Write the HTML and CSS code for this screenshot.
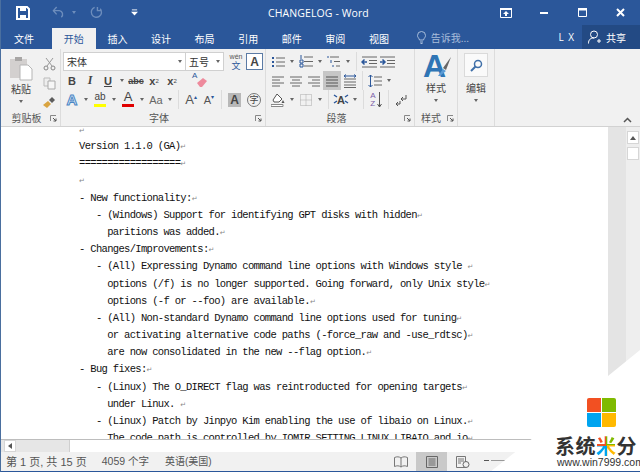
FILE: index.html
```html
<!DOCTYPE html>
<html lang="zh-CN">
<head>
    <meta charset="UTF-8">
    <title>CHANGELOG - Word</title>
    <link rel="stylesheet" href="styles.css">
</head>
<body>
    <svg class="defs" width="0" height="0">
        <symbol id="left" viewBox="0 0 14 12"><path d="M1 2h12M1 5h8M1 8h12M1 11h8" stroke="#666" fill="none"/></symbol>
        <symbol id="center" viewBox="0 0 14 12"><path d="M1 2h12M3 5h8M1 8h12M3 11h8" stroke="#666" fill="none"/></symbol>
        <symbol id="right" viewBox="0 0 14 12"><path d="M1 2h12M5 5h8M1 8h12M5 11h8" stroke="#666" fill="none"/></symbol>
        <symbol id="launch" viewBox="0 0 7 7"><path d="M.5 6V.5H6" stroke="#888" fill="none"/><path d="M3 3l3 3M6 3.500V6H3.500" stroke="#555" fill="none"/></symbol>
    </svg>

    <!-- Title bar -->
    <header class="titlebar">
        <div class="quick">
            <svg class="save" viewBox="0 0 14 14"><path d="M1 1h10l2 2v10H1z" fill="none" stroke="#fff" stroke-width="2"/><path d="M4 1h6v4H4zM4 9h6v4H4z" fill="#fff"/></svg>
            <svg class="undo" viewBox="0 0 14 14"><path d="M5 1L1.500 5 5 9M2 5h6a4 4 0 0 1 2 7" fill="none" stroke="#6d8dbc" stroke-width="1.500"/></svg>
            <span class="dd dim"></span>
            <svg class="redo" viewBox="0 0 14 14"><path d="M11 3a5.500 5.500 0 1 1-6-1.500M8 1v4h4" fill="none" stroke="#6d8dbc" stroke-width="1.500"/></svg>
            <svg class="custom" viewBox="0 0 10 8"><path d="M2 1h6" stroke="#fff"/><path d="M1 3h8L5 7.500z" fill="#fff"/></svg>
        </div>
        <div class="doc-title">CHANGELOG - Word</div>
        <div class="winctl">
            <span><svg width="12" height="10" viewBox="0 0 12 10"><path d="M.5.500h11v9H.5z" fill="none" stroke="#fff"/><path d="M0 0h12v2H0zM6 3l3 3H7v2H5V6H3z" fill="#fff"/></svg></span>
            <span><svg width="8" height="2"><path d="M0 0h8v2H0z" fill="#fff"/></svg></span>
            <span><svg width="9" height="9" viewBox="0 0 9 9"><path d="M.5.500h8v8H.5z" fill="none" stroke="#fff"/><path d="M0 0h9v2.500H0z" fill="#fff"/></svg></span>
            <span><svg width="9" height="9" viewBox="0 0 9 9"><path d="M1 1l7 7M8 1L1 8" stroke="#fff" stroke-width="2"/></svg></span>
        </div>
    </header>

    <!-- Tabs -->
    <nav class="tabs">
        <a class="tab tab-file">文件</a>
        <a class="tab active">开始</a>
        <a class="tab">插入</a>
        <a class="tab">设计</a>
        <a class="tab">布局</a>
        <a class="tab">引用</a>
        <a class="tab">邮件</a>
        <a class="tab">审阅</a>
        <a class="tab">视图</a>
        <div class="tell">
            <svg width="9" height="13" viewBox="0 0 9 13"><path d="M2.500 9C2 7 .5 6.500.5 4.500a4 4 0 0 1 8 0C8.500 6.500 7 7 6.500 9zM3 11h3M3.500 12.500h2" fill="none" stroke="#a9bedb"/></svg>
            <span>告诉我...</span>
        </div>
        <div class="user">L X</div>
        <div class="share">
            <svg width="13" height="14" viewBox="0 0 13 14"><circle cx="6" cy="4.500" r="3.500" fill="none" stroke="#fff"/><path d="M.5 13.500c0-4 2-5.500 5.500-5.500M9 11h4M11 9v4" fill="none" stroke="#fff"/></svg>
            <span>共享</span>
        </div>
    </nav>

    <!-- Ribbon -->
    <section class="ribbon">
        <div class="group g-clip">
            <div class="group-body clip-body">
                <div class="big-btn">
                    <svg width="24" height="26" viewBox="0 0 24 26"><path d="M1 4h17v19H1z" fill="#d3d0cf"/><path d="M6 2h7v4H6z" fill="#a8a6a5"/><path d="M11 10h8l4 4v11H11z" fill="#fff" stroke="#b5b5b5"/></svg>
                    <span class="big-label">粘贴</span>
                    <span class="dd"></span>
                </div>
                <div class="clip-small">
                    <svg width="13" height="14" viewBox="0 0 13 14"><path d="M3 1l6 8M10 1L4 9" stroke="#999" fill="none"/><circle cx="3" cy="11" r="2" fill="none" stroke="#888"/><circle cx="10" cy="11" r="2" fill="none" stroke="#888"/></svg>
                    <svg width="13" height="13" viewBox="0 0 13 13"><path d="M1 1h6v8H1z" fill="#eee" stroke="#bbb"/><path d="M5 4h7v8H5z" fill="#f6f6f6" stroke="#aaa"/></svg>
                    <svg width="14" height="13" viewBox="0 0 14 13"><path d="M1 9l5-4 3 3-4 4z" fill="#d9a441"/><path d="M7 4l3-3 3 3-3 3z" fill="#5d5d5d"/></svg>
                </div>
            </div>
            <div class="group-label">剪贴板<svg class="launch"><use href="#launch"/></svg></div>
        </div>

        <div class="group g-font">
            <div class="group-body">
                <div class="row">
                    <div class="combo combo-name">宋体<span class="dd"></span></div>
                    <div class="combo combo-size">五号<span class="dd"></span></div>
                    <span class="tool wen">wén<b>文</b></span>
                    <span class="tool boxed">A</span>
                </div>
                <div class="row">
                    <span class="tool txt">B</span>
                    <span class="tool txt ital">I</span>
                    <span class="tool txt under">U</span>
                    <span class="dd"></span>
                    <span class="tool txt strike">abc</span>
                    <span class="tool txt">x<sub>2</sub></span>
                    <span class="tool txt">x<sup>2</sup></span>
                    <span class="tool eraser">
                        <small class="eraser-a">A</small>
                        <svg width="12" height="11" viewBox="0 0 12 11"><path d="M1 6l6-5 4 3-5 6H4z" fill="#ee8a9c"/></svg>
                    </span>
                </div>
                <div class="row">
                    <span class="tool glow">A</span><span class="dd"></span>
                    <span class="tool mark">ab<i class="mark-bar yellow"></i></span><span class="dd"></span>
                    <span class="tool mark color">A<i class="mark-bar red"></i></span><span class="dd"></span>
                    <span class="tool case">Aa</span><span class="dd"></span>
                    <span class="vsep"></span>
                    <span class="tool grow">A<small>▴</small></span>
                    <span class="tool grow shrink">A<small>▾</small></span>
                    <span class="vsep"></span>
                    <span class="tool shade">A</span>
                    <span class="tool circled">字</span>
                </div>
            </div>
            <div class="group-label">字体<svg class="launch"><use href="#launch"/></svg></div>
        </div>

        <div class="group g-para">
            <div class="group-body">
                <div class="row">
                    <span class="tool"><svg width="14" height="12" viewBox="0 0 14 12"><path d="M5 2h9M5 6h9M5 10h9" stroke="#666"/><path d="M1 1h2v2H1zM1 5h2v2H1zM1 9h2v2H1z" fill="#2b579a"/></svg></span><span class="dd"></span>
                    <span class="tool"><svg width="14" height="13" viewBox="0 0 14 13"><path d="M5 2h9M5 6.500h9M5 11h9" stroke="#666"/><path d="M2 0v4M1 5h3v3H1zM1 9h3v3H1z" fill="none" stroke="#2b579a"/></svg></span><span class="dd"></span>
                    <span class="tool"><svg width="14" height="13" viewBox="0 0 14 13"><path d="M3 2h9M7 6.500h6M9 11h4" stroke="#666"/><path d="M1 1v2M4 5v3M6 10v2" stroke="#2b579a"/></svg></span><span class="dd"></span>
                    <span class="vsep"></span>
                    <span class="tool"><svg width="16" height="12" viewBox="0 0 16 12"><path d="M1 1h15M8 4.500h8M8 7.500h8M1 11h15" stroke="#666"/><path d="M6 6H1M3.500 3.500L1 6l2.500 2.500" fill="none" stroke="#2b579a" stroke-width="1.500"/></svg></span>
                    <span class="tool"><svg width="16" height="12" viewBox="0 0 16 12"><path d="M1 1h15M8 4.500h8M8 7.500h8M1 11h15" stroke="#666"/><path d="M1 6h5M3.500 3.500L6 6 3.500 8.500" fill="none" stroke="#2b579a" stroke-width="1.500"/></svg></span>
                </div>
                <div class="row">
                    <span class="tool"><svg class="i14"><use href="#left"/></svg></span>
                    <span class="tool"><svg class="i14"><use href="#center"/></svg></span>
                    <span class="tool"><svg class="i14"><use href="#right"/></svg></span>
                    <span class="tool selected"><svg width="14" height="12" viewBox="0 0 14 12"><path d="M1 2h12M1 5h12M1 8h12M1 11h12" stroke="#555" fill="none"/></svg></span>
                    <span class="tool"><svg width="14" height="14" viewBox="0 0 14 14"><path d="M1 5h12M1 8h12M1 11h12M1 13.500h12" stroke="#666"/><path d="M1 2h12M3 .5L1 2l2 1.500M11 .5L13 2l-2 1.500" fill="none" stroke="#2b579a"/></svg></span>
                    <span class="vsep"></span>
                    <span class="tool"><svg width="14" height="14" viewBox="0 0 14 14"><path d="M6 3h8M6 7h8M6 11h8" stroke="#666"/><path d="M2.500 1v12M.5 3l2-2 2 2M.5 11l2 2 2-2" fill="none" stroke="#2b579a"/></svg></span><span class="dd"></span>
                </div>
                <div class="row">
                    <span class="tool"><svg width="15" height="15" viewBox="0 0 15 15"><path d="M2 8l4-6 5 5-3 3H3z" fill="#fff" stroke="#555"/><path d="M12 8l1.500 3h-3z" fill="#555"/><path d="M0 12.500h12v2H0z" fill="#fff" stroke="#888"/></svg></span><span class="dd"></span>
                    <span class="tool"><svg width="12" height="12" viewBox="0 0 12 12"><path d="M.5.500h11v11H.5zM6 .5v11M.5 6h11" fill="none" stroke="#aaa" stroke-dasharray="1 1"/></svg></span><span class="dd"></span>
                    <span class="vsep"></span>
                    <span class="tool layout">A<svg width="16" height="10" viewBox="0 0 16 10"><path d="M1 1l3 2M15 1l-3 2M1 9l3-2M15 9l-3-2" stroke="#2b579a" stroke-width="1.500"/></svg></span><span class="dd"></span>
                    <span class="vsep"></span>
                    <span class="tool sort"><span>A<br>Z</span><svg width="5" height="16" viewBox="0 0 5 16"><path d="M2.500 0v15M.5 12l2 3 2-3" fill="none" stroke="#555"/></svg></span>
                    <span class="vsep"></span>
                    <span class="tool"><svg width="12" height="12" viewBox="0 0 12 12"><path d="M11 1v4H6M8 3L6 5l2 2M5 7v3H1M3 8l-2 2 2 2" fill="none" stroke="#555"/></svg></span>
                </div>
            </div>
            <div class="group-label">段落<svg class="launch"><use href="#launch"/></svg></div>
        </div>

        <div class="group g-styles">
            <div class="group-body big-col">
                <div class="styles-icon">A
                    <svg width="14" height="22" viewBox="0 0 14 22"><path d="M13 1L5 12l3 2z" fill="#666"/><path d="M5 13l3 2-6 5H0z" fill="#5b9bd5"/></svg>
                </div>
                <span class="big-label">样式</span>
                <span class="dd"></span>
            </div>
            <div class="group-label">样式<svg class="launch"><use href="#launch"/></svg></div>
        </div>

        <div class="group g-edit">
            <div class="group-body big-col">
                <div class="edit-box">
                    <svg width="13" height="13" viewBox="0 0 13 13"><circle cx="8" cy="5" r="3.500" fill="none" stroke="#3f6fa8" stroke-width="1.500"/><path d="M5.500 7.500L1 12" stroke="#3f6fa8" stroke-width="2"/></svg>
                </div>
                <span class="big-label">编辑</span>
                <span class="dd"></span>
            </div>
        </div>

        <svg class="collapse" width="9" height="6" viewBox="0 0 9 6"><path d="M1 5l3.500-3.500L8 5" fill="none" stroke="#555" stroke-width="1.500"/></svg>
    </section>

    <!-- Document -->
    <main class="workspace">
        <div class="page">
<pre class="line first"><i>↵</i></pre>
<pre class="line">Version 1.1.0 (GA)<i>↵</i></pre>
<pre class="line">==================<i>↵</i></pre>
<pre class="line"><i>↵</i></pre>
<pre class="line">- New functionality:<i>↵</i></pre>
<pre class="line">   - (Windows) Support for identifying GPT disks with hidden<i>↵</i></pre>
<pre class="line">     paritions was added.<i>↵</i></pre>
<pre class="line">- Changes/Improvements:<i>↵</i></pre>
<pre class="line">   - (All) Expressing Dynamo command line options with Windows style <i>↵</i></pre>
<pre class="line">     options (/f) is no longer supported. Going forward, only Unix style<i>↵</i></pre>
<pre class="line">     options (-f or --foo) are available.<i>↵</i></pre>
<pre class="line">   - (All) Non-standard Dynamo command line options used for tuning<i>↵</i></pre>
<pre class="line">     or activating alternative code paths (-force_raw and -use_rdtsc)<i>↵</i></pre>
<pre class="line">     are now consolidated in the new --flag option.<i>↵</i></pre>
<pre class="line">- Bug fixes:<i>↵</i></pre>
<pre class="line">   - (Linux) The O_DIRECT flag was reintroducted for opening targets<i>↵</i></pre>
<pre class="line">     under Linux. <i>↵</i></pre>
<pre class="line">   - (Linux) Patch by Jinpyo Kim enabling the use of libaio on Linux.<i>↵</i></pre>
<pre class="line">     The code path is controlled by IOMIR_SETTING_LINUX_LIBAIO and io<i>↵</i></pre>
        </div>
        <div class="margin-strip"></div>
        <aside class="vscroll">
            <span class="vbtn"><i class="up"></i></span>
            <span class="vthumb"></span>
        </aside>
    </main>

    <div class="hscroll">
        <span class="hbtn"><i class="lf"></i></span>
        <span class="htrack"></span>
        <span class="hthumb"></span>
    </div>

    <!-- Status bar -->
    <footer class="status">
        <span class="st-page">第 1 页, 共 15 页</span>
        <span class="st-count">4059 个字</span>
        <span class="st-lang">英语(美国)</span>
        <div class="views">
            <span class="view"><svg width="14" height="12" viewBox="0 0 14 12"><path d="M.5 1.500C3 .5 5 .5 7 2c2-1.500 4-1.500 6.500-.5v9C11 9.500 9 9.500 7 11c-2-1.500-4-1.500-6.500-.5zM7 2v9" fill="none" stroke="#777"/></svg></span>
            <span class="view on"><svg width="12" height="12" viewBox="0 0 12 12"><path d="M.5.500h11v11H.5z" fill="none" stroke="#666"/><path d="M2.500 3h7M2.500 5h7M2.500 7h7M2.500 9h7" stroke="#666"/></svg></span>
            <span class="view"><svg width="14" height="12" viewBox="0 0 14 12"><path d="M.5.500h9v11H.5zM2 3h6M2 5h6M2 7h3" fill="none" stroke="#777"/><circle cx="10" cy="8.500" r="3" fill="#f1f1f1" stroke="#666"/></svg></span>
            <span class="zoom-minus"></span>
            <span class="zoom-track"></span>
        </div>
    </footer>

    <!-- Watermark pasted over the bottom right corner -->
    <div class="watermark">
        <div class="wm-logo"><i class="r"></i><i class="g"></i><i class="b"></i><i class="y"></i></div>
        <div class="wm-name">系统<em>米</em>分</div>
        <div class="wm-url">www.win7999.com</div>
    </div>
</body>
</html>
```

FILE: styles.css
```css
/* Page frame */
* {
    box-sizing: border-box;
}

body {
    margin: 0;
    width: 640px;
    height: 472px;
    overflow: hidden;
    position: relative;
    display: flex;
    flex-direction: column;
    font-family: "Noto Sans CJK SC", "Liberation Sans", sans-serif;
    font-size: 10px;
    color: #444;
    background: #fff;
    border-left: 1px solid #4a6f9f;
    border-bottom: 1px solid #2b579a;
}

.defs {
    position: absolute;
}

/* Title bar */
.titlebar {
    height: 25px;
    flex: none;
    margin-left: -1px;
    display: flex;
    align-items: center;
    background: #2b579a;
    color: #fff;
}

.quick {
    width: 268px;
    display: flex;
    align-items: center;
}

.save {
    width: 14px;
    height: 14px;
    margin-left: 16px;
}

.undo {
    width: 13px;
    height: 13px;
    margin-left: 22px;
}

.redo {
    width: 13px;
    height: 13px;
    margin-left: 11px;
}

.custom {
    width: 9px;
    height: 7px;
    margin-left: 27px;
}

.doc-title {
    margin-right: auto;
    font-family: "Open Sans", sans-serif;
    font-size: 10.5px;
    letter-spacing: 0.1px;
}

.winctl {
    display: flex;
    margin-right: 1px;
}

.winctl span {
    width: 38px;
    display: flex;
    justify-content: center;
    align-items: center;
}

/* Tabs */
.tabs {
    height: 24px;
    flex: none;
    margin-left: -1px;
    display: flex;
    align-items: flex-end;
    background: #2b579a;
    color: #fff;
}

.tab {
    width: 43.6px;
    height: 21px;
    display: flex;
    align-items: center;
    justify-content: center;
}

.tab-file {
    width: 52px;
    padding-right: 4px;
}

.tab.active {
    background: #f1f1f1;
    color: #2b579a;
}

.tell {
    height: 24px;
    margin-left: 16px;
    display: flex;
    align-items: center;
    gap: 5px;
    color: #a9bedb;
}

.user {
    height: 24px;
    margin-left: auto;
    margin-right: 7px;
    display: flex;
    align-items: center;
    font-family: "Open Sans", sans-serif;
    letter-spacing: 1px;
}

.share {
    width: 58px;
    height: 24px;
    padding-left: 6px;
    display: flex;
    align-items: center;
    gap: 5px;
    background: #234a84;
}

/* Ribbon */
.ribbon {
    height: 78px;
    flex: none;
    position: relative;
    display: flex;
    padding-left: 2px;
    background: #f1f1f1;
    border-bottom: 1px solid #d2d2d2;
}

.group {
    position: relative;
    display: flex;
    flex-direction: column;
    justify-content: space-between;
    padding-top: 3px;
    border-right: 1px solid #dcdcdc;
}

.g-clip {
    width: 58px;
}

.g-font {
    width: 205px;
    padding-left: 2px;
}

.g-para {
    width: 149px;
    padding-left: 3px;
}

.g-styles {
    width: 43px;
}

.g-edit {
    width: 37px;
}

.group-label {
    height: 17px;
    display: flex;
    justify-content: center;
    align-items: center;
    color: #555;
    padding-right: 10px;
}

.launch {
    position: absolute;
    right: 3px;
    bottom: 4px;
    width: 7px;
    height: 7px;
}

.row {
    height: 19px;
    display: flex;
    align-items: center;
}

.tool {
    width: 18px;
    height: 19px;
    flex: none;
    display: flex;
    align-items: center;
    justify-content: center;
    font-family: "Liberation Sans", sans-serif;
    font-size: 12px;
    color: #444;
}

.dd {
    width: 10px;
    height: 10px;
    flex: none;
    display: inline-flex;
    align-items: center;
    justify-content: center;
}

.dd::after {
    content: "";
    border-top: 3px solid #666;
    border-left: 2.5px solid transparent;
    border-right: 2.5px solid transparent;
}

.dd.dim {
    margin-left: 4px;
}

.dd.dim::after {
    border-top-color: #6d8dbc;
}

.vsep {
    width: 1px;
    height: 19px;
    flex: none;
    margin: 0 3px;
    background: #dcdcdc;
}

.i14 {
    width: 14px;
    height: 12px;
}

.selected {
    background: #c6c6c6;
}

/* Clipboard */
.clip-body {
    display: flex;
}

.big-btn {
    width: 36px;
    padding-top: 3px;
    display: flex;
    flex-direction: column;
    align-items: center;
}

.big-label {
    line-height: 15px;
    color: #444;
}

.clip-small {
    display: flex;
    flex-direction: column;
    align-items: center;
    gap: 6px;
    padding-top: 5px;
    margin-left: 3px;
}

/* Font group */
.combo {
    height: 19px;
    flex: none;
    display: flex;
    align-items: center;
    justify-content: space-between;
    padding-left: 3px;
    background: #fff;
    border: 1px solid #d0d0d0;
    color: #333;
}

.combo-name {
    width: 123px;
}

.combo-size {
    width: 39px;
    margin-left: -1px;
    margin-right: 3px;
}

.wen {
    flex-direction: column;
    font-size: 7px;
    line-height: 8px;
    color: #555;
}

.wen b {
    font-family: "Noto Sans CJK SC", sans-serif;
    font-weight: 400;
    font-size: 9px;
    line-height: 9px;
    color: #2b579a;
}

.boxed {
    width: 17px;
    height: 17px;
    margin-left: 1px;
    border: 1px solid #5b7ba5;
    background: #fff;
    font-weight: 700;
    font-size: 12px;
}

.txt {
    font-weight: 700;
    font-size: 11px;
}

.txt sub,
.txt sup {
    font-size: 6px;
    font-weight: 400;
    line-height: 0;
}

.ital {
    font-style: italic;
    font-family: "Liberation Serif", serif;
    font-size: 12px;
}

.under {
    text-decoration: underline;
}

.strike {
    font-size: 9px;
    text-decoration: line-through;
}

.eraser {
    position: relative;
    margin-left: 10px;
    padding: 4px 0 0 3px;
}

.eraser-a {
    position: absolute;
    left: 1px;
    top: 0;
    font-size: 8px;
    line-height: 9px;
    color: #2b579a;
}

.glow {
    font-weight: 700;
    font-size: 15px;
    color: #dbe8f5;
    -webkit-text-stroke: 1px #4a86c5;
}

.mark {
    position: relative;
    align-items: flex-start;
    font-size: 10px;
    line-height: 13px;
}

.mark-bar {
    position: absolute;
    left: 3px;
    right: 3px;
    bottom: 2px;
    height: 3px;
}

.yellow {
    background: #ffff00;
}

.red {
    background: #e00000;
}

.color {
    font-size: 13px;
}

.case {
    font-size: 11px;
    color: #666;
}

.grow {
    font-size: 13px;
    color: #555;
}

.shrink {
    font-size: 11px;
}

.grow small {
    font-size: 6px;
    align-self: flex-start;
    margin-top: 3px;
    color: #2b579a;
}

.shade {
    width: 13px;
    height: 14px;
    margin: 0 3px;
    background: #b8b8b8;
    font-weight: 700;
}

.circled {
    width: 14px;
    height: 14px;
    margin-left: 3px;
    border: 1px solid #777;
    border-radius: 50%;
    font-family: "Noto Sans CJK SC", sans-serif;
    font-size: 9px;
}

/* Paragraph group */
.layout {
    position: relative;
    font-weight: 700;
    font-size: 11px;
}

.layout svg {
    position: absolute;
    left: 1px;
    top: 4px;
}

.sort {
    gap: 1px;
    font-size: 8px;
    line-height: 8px;
    color: #7a5fa8;
}

/* Styles and editing */
.big-col {
    display: flex;
    flex-direction: column;
    align-items: center;
}

.styles-icon {
    height: 28px;
    width: 26px;
    position: relative;
    font-family: "Liberation Sans", sans-serif;
    font-weight: 700;
    font-size: 32px;
    line-height: 28px;
    color: #2f75b5;
}

.styles-icon svg {
    position: absolute;
    right: -3px;
    top: 4px;
}

.edit-box {
    width: 24px;
    height: 24px;
    margin-top: 1px;
    margin-bottom: 3px;
    display: flex;
    align-items: center;
    justify-content: center;
    background: #fafafa;
    border: 1px solid #dadada;
}

.collapse {
    position: absolute;
    right: 8px;
    bottom: 3px;
}

/* Document area */
.workspace {
    flex: 1;
    min-height: 0;
    display: flex;
    overflow: hidden;
}

.page {
    width: 607px;
    flex: none;
    padding-left: 78px;
    background: #fff;
    overflow: hidden;
}

.line {
    margin: 0;
    height: 17.2px;
    line-height: 17.2px;
    font-family: "Liberation Mono", monospace;
    font-size: 10.5px;
    letter-spacing: -0.67px;
    color: #111;
    white-space: pre;
}

.line.first {
    height: 11px;
    line-height: 6px;
}

.line i {
    font-family: "DejaVu Sans", sans-serif;
    font-style: normal;
    font-size: 7px;
    letter-spacing: 0;
    color: #888;
}

.margin-strip {
    width: 18px;
    flex: none;
    background: #e4e4e4;
}

.vscroll {
    flex: 1;
    display: flex;
    flex-direction: column;
    align-items: center;
    gap: 3px;
    padding-top: 4px;
    background: #eeeeee;
}

.vbtn,
.vthumb {
    width: 12px;
    height: 13px;
    display: flex;
    align-items: center;
    justify-content: center;
    background: #fff;
    border: 1px solid #d6d6d6;
}

.up {
    border-bottom: 4px solid #555;
    border-left: 3px solid transparent;
    border-right: 3px solid transparent;
}

.hscroll {
    height: 13px;
    flex: none;
    display: flex;
    align-items: stretch;
    padding-left: 3px;
    background: #e6e6e6;
    border-top: 1px solid #bdbdbd;
}

.hbtn {
    width: 12px;
    display: flex;
    align-items: center;
    justify-content: center;
    background: #fff;
    border: 1px solid #d6d6d6;
}

.lf {
    border-right: 4px solid #555;
    border-top: 3px solid transparent;
    border-bottom: 3px solid transparent;
}

.htrack {
    width: 53px;
}

.hthumb {
    flex: 1;
    background: #fff;
    border-left: 1px solid #cfcfcf;
}

/* Status bar */
.status {
    height: 19px;
    flex: none;
    display: flex;
    align-items: center;
    padding-left: 5px;
    padding-bottom: 2px;
    background: #f1f1f1;
    font-family: "Liberation Sans", "Noto Sans CJK SC", sans-serif;
    font-size: 11px;
    color: #555;
}

.st-count {
    margin-left: 15px;
    font-size: 10.5px;
}

.st-lang {
    margin-left: 16px;
    font-size: 10px;
}

.views {
    margin-left: auto;
    margin-right: 110px;
    display: flex;
    align-items: center;
}

.view {
    width: 31px;
    height: 19px;
    margin-bottom: -2px;
    display: flex;
    align-items: center;
    justify-content: center;
}

.view.on {
    background: #c9c9c9;
}

.zoom-minus {
    width: 5px;
    height: 1px;
    margin-left: 6px;
    background: #555;
}

.zoom-track {
    width: 39px;
    height: 1px;
    margin-left: 2px;
    background: #999;
}

/* Watermark */
.watermark {
    position: absolute;
    right: 0;
    bottom: -1px;
    width: 160px;
    height: 132px;
    padding-right: 3px;
    padding-bottom: 4px;
    display: flex;
    flex-direction: column;
    justify-content: flex-end;
    align-items: flex-end;
    background: #fff;
    clip-path: polygon(160px 10px, 128px 36px, 53px 98px, 10px 132px, 160px 132px);
}

.wm-logo {
    width: 29px;
    height: 29px;
    margin-right: 21px;
    margin-bottom: 9px;
    display: grid;
    grid-template-columns: 1fr 1fr;
    gap: 1px;
    border-radius: 2px;
    overflow: hidden;
}

.wm-logo .r {
    background: #f25022;
}

.wm-logo .g {
    background: #7fba00;
}

.wm-logo .b {
    background: #00a4ef;
}

.wm-logo .y {
    background: #ffb900;
}

.wm-name {
    width: 82px;
    height: 20px;
    font-size: 20px;
    line-height: 20px;
    font-weight: 700;
    letter-spacing: 0.5px;
    color: #333;
    white-space: nowrap;
}

.wm-name em {
    font-style: normal;
    background: conic-gradient(#7fba00 0 25%, #ffb900 0 50%, #00a4ef 0 75%, #f25022 0);
    -webkit-background-clip: text;
    background-clip: text;
    color: transparent;
}

.wm-url {
    width: 80px;
    font-family: "Liberation Sans", sans-serif;
    font-size: 10.5px;
    line-height: 12px;
    color: #333;
    white-space: nowrap;
}
```
